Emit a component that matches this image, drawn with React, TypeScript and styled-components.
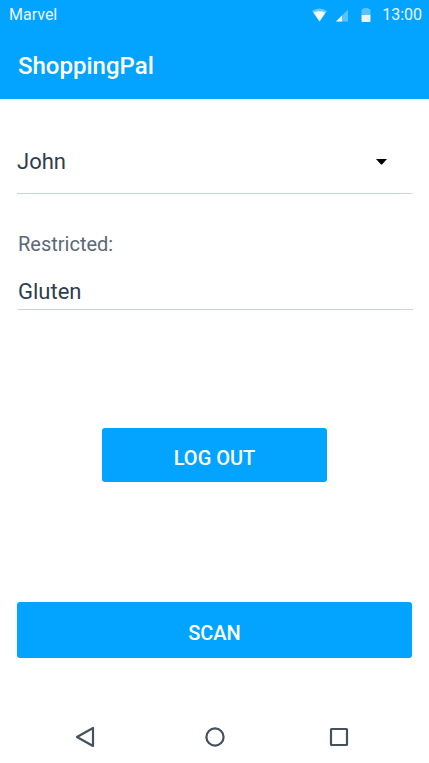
import React from "react";
import styled, { createGlobalStyle } from "styled-components";

const GlobalStyle = createGlobalStyle`
  * { box-sizing: border-box; }
  body { margin: 0; background: #fff; font-family: Roboto, sans-serif; color: #2f3d4e; }
  button, select, input { font: inherit; color: inherit; }
`;

const Screen = styled.div`
  display: flex;
  flex-direction: column;
  min-height: 100vh;
`;

const Header = styled.header`
  background: #03a4ff;
  color: #fff;
`;

const StatusBar = styled.div`
  display: flex;
  align-items: center;
  justify-content: space-between;
  height: 32px;
  padding: 0 7px 3px 9px;
  font-size: 16px;
  color: #e9f6ff;
`;

const StatusIcons = styled.div`
  display: flex;
  align-items: center;
`;

const StatusIcon = styled.svg<{ $gap: number }>`
  margin-right: ${(p) => p.$gap}px;
`;

const Title = styled.h1`
  margin: 0;
  padding: 16px 18px 15px;
  font-size: 24px;
  line-height: 36px;
  font-weight: 500;
`;

const Main = styled.main`
  display: flex;
  flex: 1;
  flex-direction: column;
  padding: 32px 17px 0;
`;

const SelectWrap = styled.div`
  display: grid;
  align-items: center;
  border-bottom: 1px solid #c8d3e0;
  > * { grid-area: 1 / 1; }
`;

const Select = styled.select`
  appearance: none;
  height: 62px;
  padding: 0 0 2px;
  border: 0;
  background: transparent;
  font-size: 22px;
`;

const Arrow = styled.svg`
  justify-self: end;
  margin-right: 25px;
  pointer-events: none;
`;

const Field = styled.div`
  display: flex;
  flex-direction: column;
  margin: 38px -1px 0 1px;
`;

const Label = styled.label`
  font-size: 20px;
  line-height: 24px;
  color: #5c6876;
`;

const Input = styled.input`
  width: 100%;
  height: 38px;
  margin-top: 16px;
  padding: 2px 0 0;
  border: 0;
  border-bottom: 1px solid #c8d3e0;
  border-radius: 0;
  background: transparent;
  font-size: 22px;
`;

const Button = styled.button<{ $compact?: boolean }>`
  align-self: center;
  width: ${(p) => (p.$compact ? "57%" : "100%")};
  height: ${(p) => (p.$compact ? "54px" : "56px")};
  margin-top: ${(p) => (p.$compact ? "118px" : "120px")};
  padding: 6px 0 0;
  border: 0;
  border-radius: 3px;
  background: #03a4ff;
  color: #fff;
  font-size: 20px;
  font-weight: 500;
`;

const NavBar = styled.nav`
  display: flex;
  justify-content: space-between;
  padding: 0 76px 12px 72px;
`;

const NavButton = styled.button`
  display: flex;
  padding: 0;
  border: 0;
  background: none;
`;

const NavIcon = styled.svg`
  width: 28px;
  height: 28px;
  fill: none;
  stroke: #45505d;
  stroke-width: 2.2;
  stroke-linejoin: round;
`;

export default function App() {
  return (
    <Screen>
      <GlobalStyle />
      <Header>
        <StatusBar>
          <span>Marvel</span>
          <StatusIcons>
            <StatusIcon $gap={9} width="15" height="14" viewBox="0 0 15 14" aria-hidden="true">
              <path d="M0 3Q7.5-2 15 3L7.5 13.5Z" fill="#fff" fillOpacity=".4" />
              <path d="M1.5 4.500Q7.5 2 13.500 4.500L7.5 13.5Z" fill="#fff" fillOpacity=".9" />
            </StatusIcon>
            <StatusIcon $gap={12} width="13" height="14" viewBox="0 0 13 14" aria-hidden="true">
              <path d="M0 13.5 12 1.5V13.5Z" fill="#fff" fillOpacity=".35" />
              <path d="M0 13.5 6 7.5V13.5Z" fill="#fff" fillOpacity=".9" />
            </StatusIcon>
            <StatusIcon $gap={11} width="10" height="14" viewBox="0 0 10 14" aria-hidden="true">
              <path d="M.5 2Q.5 1 2 1L3 0H7L8 1Q9.500 1 9.500 2V7H.5Z" fill="#fff" fillOpacity=".35" />
              <path d="M.5 7H9.500V13Q9.500 14 8.500 14H1.500Q.5 14 .5 13Z" fill="#fff" fillOpacity=".9" />
            </StatusIcon>
            <span>13:00</span>
          </StatusIcons>
        </StatusBar>
        <Title>ShoppingPal</Title>
      </Header>
      <Main>
        <SelectWrap>
          <Select aria-label="Profile" defaultValue="John">
            <option>John</option>
          </Select>
          <Arrow width="11" height="6" viewBox="0 0 11 6" aria-hidden="true">
            <path d="M0 0H11L6.500 5Q5.500 6 4.500 5Z" fill="#000" />
          </Arrow>
        </SelectWrap>
        <Field>
          <Label htmlFor="restricted">Restricted:</Label>
          <Input id="restricted" defaultValue="Gluten" />
        </Field>
        <Button type="button" $compact>LOG OUT</Button>
        <Button type="button">SCAN</Button>
      </Main>
      <NavBar aria-label="System">
        <NavButton type="button" aria-label="Back">
          <NavIcon viewBox="0 0 28 28">
            <path d="M21 5V23L5 14Z" />
          </NavIcon>
        </NavButton>
        <NavButton type="button" aria-label="Home">
          <NavIcon viewBox="0 0 28 28">
            <circle cx="16" cy="14" r="8.600" />
          </NavIcon>
        </NavButton>
        <NavButton type="button" aria-label="Recent apps">
          <NavIcon viewBox="0 0 28 28">
            <rect x="6" y="6" width="16" height="16" rx=".5" />
          </NavIcon>
        </NavButton>
      </NavBar>
    </Screen>
  );
}
